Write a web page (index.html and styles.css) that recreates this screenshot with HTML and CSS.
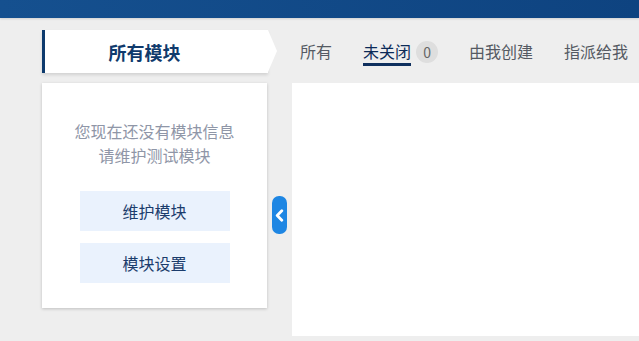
FILE: index.html
```html
<!DOCTYPE html>
<html lang="zh-CN">
<head>
    <meta charset="UTF-8">
    <meta name="viewport" content="width=device-width, initial-scale=1.0">
    <title>模块</title>
    <link rel="stylesheet" href="styles.css">
</head>
<body>
    <div class="topbar"></div>

    <div class="page">
        <!-- 左侧模块栏 -->
        <div class="sidebar">
            <div class="side-head">所有模块</div>
            <div class="side-card">
                <p class="empty-tip">您现在还没有模块信息<br>请维护测试模块</p>
                <button class="side-btn">维护模块</button>
                <button class="side-btn">模块设置</button>
            </div>
        </div>

        <div class="gutter">
            <div class="collapse-handle">
                <svg width="9" height="13" viewBox="0 0 9 13">
                    <path d="M6.8 1.8 L2.2 6.5 L6.8 11.2" fill="none" stroke="#fff" stroke-width="2.8" stroke-linecap="round" stroke-linejoin="round"/>
                </svg>
            </div>
        </div>

        <!-- 右侧内容 -->
        <div class="main">
            <div class="tabs">
                <div class="tab"><span class="tab-label">所有</span></div>
                <div class="tab active"><span class="tab-label">未关闭</span><span class="badge">0</span></div>
                <div class="tab"><span class="tab-label">由我创建</span></div>
                <div class="tab"><span class="tab-label">指派给我</span></div>
            </div>
            <div class="content"></div>
        </div>
    </div>
</body>
</html>
```

FILE: styles.css
```css
* {
    box-sizing: border-box;
    margin: 0;
    padding: 0;
}

body {
    font-family: "Noto Sans CJK SC", "Noto Sans", sans-serif;
    background: #eeeeee;
    overflow: hidden;
}

.topbar {
    height: 18px;
    background: linear-gradient(90deg, #15508f 0%, #0e4380 100%);
    box-shadow: 0 1px 2px rgba(0, 0, 0, 0.12);
}

.page {
    display: flex;
    padding: 12px 0 0 42px;
}

.sidebar {
    width: 225px;
    flex-shrink: 0;
}

.side-head {
    position: relative;
    height: 43px;
    width: 226px;
    background: white;
    border-left: 3px solid #0d3a6d;
    box-shadow: 0 2px 3px rgba(0, 0, 0, 0.12);
    display: flex;
    align-items: center;
    justify-content: center;
    padding-right: 24px;
    font-size: 18px;
    font-weight: 700;
    color: #103a6c;
}

.side-head::after {
    content: "";
    position: absolute;
    left: 100%;
    top: 0;
    border-top: 21.5px solid transparent;
    border-bottom: 21.5px solid transparent;
    border-left: 9px solid white;
}

.side-card {
    margin-top: 10px;
    height: 225px;
    background: white;
    box-shadow: 0 1px 3px rgba(0, 0, 0, 0.2);
    display: flex;
    flex-direction: column;
    align-items: center;
    padding-top: 36px;
}

.empty-tip {
    font-size: 16px;
    line-height: 24px;
    color: #8f96a7;
    text-align: center;
    margin-bottom: 24px;
}

.side-btn {
    width: 150px;
    height: 40px;
    border: none;
    background: #eaf2fd;
    color: #1b3c6c;
    font-family: inherit;
    font-size: 16px;
    margin-bottom: 12px;
    cursor: pointer;
}

.gutter {
    width: 25px;
    flex-shrink: 0;
    padding: 166px 0 0 5px;
}

.collapse-handle {
    width: 15px;
    height: 38px;
    border-radius: 7px;
    background: #1e86e3;
    display: flex;
    align-items: center;
    justify-content: center;
}

.main {
    flex: 1;
    display: flex;
    flex-direction: column;
}

.tabs {
    height: 43px;
    display: flex;
    align-items: center;
    padding-left: 8px;
    gap: 31px;
}

.tab {
    display: flex;
    align-items: center;
    font-size: 16px;
    color: #555a63;
}

.tab-label {
    line-height: 22px;
    padding: 3px 0 1px;
    border-bottom: 3px solid transparent;
}

.tab.active .tab-label {
    color: #0b2a58;
    border-bottom-color: #0f2f5e;
}

.badge {
    width: 22px;
    height: 22px;
    margin-left: 5px;
    border-radius: 50%;
    background: #dedede;
    color: #666;
    font-size: 14px;
    display: flex;
    align-items: center;
    justify-content: center;
}

.content {
    margin-top: 10px;
    height: 253px;
    background: white;
}
```
